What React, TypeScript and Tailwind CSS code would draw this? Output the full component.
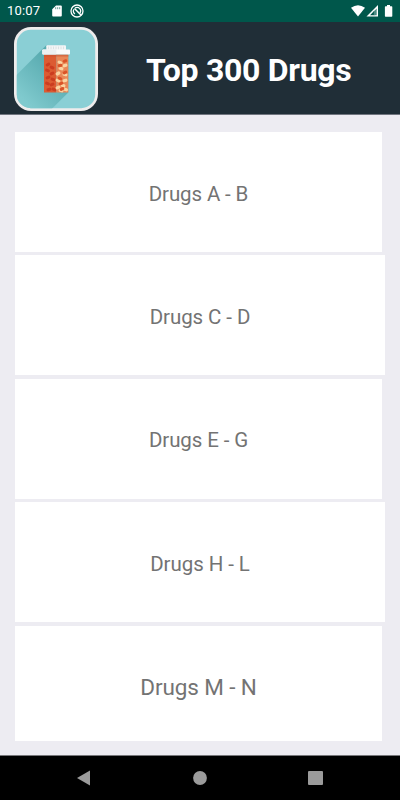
import React from "react";
import clsx from "clsx";

const GROUPS = [
  { label: "Drugs A - B", box: "w-[367px] h-[120px] pt-[4px]", text: "text-[20.5px] tracking-[-0.12px]" },
  { label: "Drugs C - D", box: "w-[370px] h-[120px] pt-[3px]", text: "text-[20.5px] tracking-[-0.08px]" },
  { label: "Drugs E - G", box: "w-[367px] h-[120px] pt-[3px]", text: "text-[20.5px] tracking-[-0.12px]" },
  { label: "Drugs H - L", box: "w-[370px] h-[120px] pt-[4px]", text: "text-[20.5px] tracking-[-0.08px]" },
  { label: "Drugs M - N", box: "w-[367px] h-[115px] pt-[9px]", text: "text-[22.5px] tracking-[-0.12px]" },
];

// [x, y, rotation] of every pill inside the bottle
const DARK_PILLS = [
  [48, 64, -30], [52, 67, 25], [47.5, 70, 20], [52, 73, -25], [48, 77, -20],
  [53, 79, 20], [47.5, 83, 20], [52, 84, -20], [49, 89, -10], [54, 89, 20],
];
const LIGHT_PILLS = [
  [60, 62, 25], [65, 65, -20], [61, 68, 20], [58, 73, -30], [65, 74, 15],
  [58, 80, 25], [65, 80, -20], [63, 85, 20], [58, 87, -25], [65.5, 89, 15], [61, 90, 20],
];
const ORANGE_PILLS = [
  [65, 60.5, -20], [60, 65, -15], [65, 72, -25], [60, 78, 20], [61, 83, -20], [62, 88.5, -25],
];

const StatusBar = () => (
  <div className="flex h-[22px] items-center bg-[#00574b] pl-[7px] pr-[7px] text-white">
    <span className="w-[45px] text-[13px] leading-[22px] tracking-[0.2px]">10:07</span>
    <svg className="h-[12px] w-[10px]" viewBox="0 0 10 12" fill="white">
      <path d="M4 .5h4.8q1 0 1 1v9q0 1-1 1H1.2q-1 0-1-1V4.3z" />
      <path d="M3.7 2.2v2M5.7 2.2v2M7.7 2.2v2" stroke="#00574b" strokeWidth=".6" />
    </svg>
    <svg className="ml-[8px] h-[14px] w-[14px]" viewBox="0 0 14 14" fill="none" stroke="white">
      <circle cx="7" cy="7" r="6" strokeWidth="1.3" />
      <path d="M4.9 9.9A3.5 3.5 0 0 1 4 5.2M5 4A3.6 3.6 0 0 1 10 9" strokeWidth="1.2" />
      <path d="M4.5 4.5L11 11" strokeWidth="1.5" />
    </svg>
    <svg className="ml-auto h-[12px] w-[42px]" viewBox="0 0 42 12" fill="white">
      <path d="M0 2.8Q7 -2.3 14 2.8L7 11.5z" />
      <path d="M15.5 11.5L27 0V11.5z" />
      <path d="M19 10.2L23.5 5.6V10.2z" fill="#00574b" />
      <path d="M22.8 6.5L25.7 3.5V10.2H22.8z" fill="#4d8c83" />
      <path d="M36 0h3v1.2h1.6q.7 0 .7.7v9q0 .8-.7.8h-6q-.7 0-.7-.8v-9q0-.7.7-.7H36z" />
    </svg>
  </div>
);

const Logo = () => (
  <svg className="h-[84px] w-[84px]" viewBox="14 26.5 84 84">
    <defs>
      <linearGradient id="shade" gradientUnits="userSpaceOnUse" x1="58" y1="68" x2="25" y2="101">
        <stop offset="0" stopColor="#59abb0" />
        <stop offset="1" stopColor="#80cace" />
      </linearGradient>
      <clipPath id="tile">
        <rect x="16.8" y="29.3" width="78.4" height="78.4" rx="14" />
      </clipPath>
    </defs>
    <rect x="14" y="26.5" width="84" height="84" rx="17" fill="#eeecec" />
    <rect x="16.8" y="29.3" width="78.4" height="78.4" rx="14" fill="#8acfd5" />
    <g clipPath="url(#tile)">
      <path d="M46 45L10 81V150L68.3 92V54z" fill="url(#shade)" />
    </g>
    <rect x="44" y="54" width="12.3" height="38" fill="#dc5b32" />
    <rect x="56.3" y="54" width="12" height="38" fill="#e98757" />
    <rect x="44" y="54" width="24.3" height="2" fill="#c64d2d" opacity=".5" />
    {DARK_PILLS.map(([x, y, r], i) => (
      <rect key={i} x={x - 2.5} y={y - 1.5} width="5" height="3" rx="1.5" fill="#cb3d20" transform={`rotate(${r} ${x} ${y})`} />
    ))}
    {LIGHT_PILLS.map(([x, y, r], i) => (
      <rect key={i} x={x - 2.5} y={y - 1.6} width="5" height="3.2" rx="1.5" fill="#fbd3a0" transform={`rotate(${r} ${x} ${y})`} />
    ))}
    {ORANGE_PILLS.map(([x, y, r], i) => (
      <rect key={i} x={x - 2.4} y={y - 1.5} width="4.8" height="3" rx="1.5" fill="#da5327" transform={`rotate(${r} ${x} ${y})`} />
    ))}
    <rect x="46.3" y="44.8" width="19.7" height="5" rx="1" fill="#f3f5f6" />
    <path d="M48.5 46v3M51 46v3M53.5 46v3M56 46v3M58.5 46v3M61 46v3M63.5 46v3" stroke="#d5dde0" strokeWidth=".8" />
    <rect x="42.3" y="49" width="27.7" height="5" rx=".8" fill="#fafafa" />
    <rect x="42.3" y="49" width="14" height="5" rx=".8" fill="#eceff1" />
  </svg>
);

export default function App() {
  return (
    <div className="flex h-[800px] w-[400px] flex-col overflow-hidden bg-[#edecf2] font-['Roboto','Liberation_Sans',sans-serif]">
      <StatusBar />
      <header className="flex h-[93px] shrink-0 items-start border-b border-[#70757f] bg-[#202e37] pl-[14px] pt-[4.5px]">
        <Logo />
        <h1 className="ml-[48px] mt-[20px] whitespace-nowrap text-[32px] font-bold leading-[46px] tracking-[-0.3px] text-white">
          Top 300 Drugs
        </h1>
      </header>

      <main className="flex flex-1 flex-col gap-[3.4px] pl-[15px] pt-[17px]">
        {GROUPS.map(({ label, box, text }) => (
          <button
            key={label}
            className={clsx("flex shrink-0 items-center justify-center bg-white text-[#737373]", box, text)}
          >
            {label}
          </button>
        ))}
      </main>

      <nav className="flex h-[45px] shrink-0 items-center border-t border-[#77777a] bg-black">
        <svg className="ml-[77px] h-[16px] w-[14px]" viewBox="0 0 14 16" fill="#9b9b9b">
          <path d="M0 8L13 .5V15.5z" />
        </svg>
        <svg className="ml-[102px] h-[14px] w-[14px]" viewBox="0 0 14 14" fill="#9b9b9b">
          <circle cx="7" cy="7" r="6.9" />
        </svg>
        <div className="ml-[101px] size-[14.5px] rounded-[1px] bg-[#9b9b9b]" />
      </nav>
    </div>
  );
}
